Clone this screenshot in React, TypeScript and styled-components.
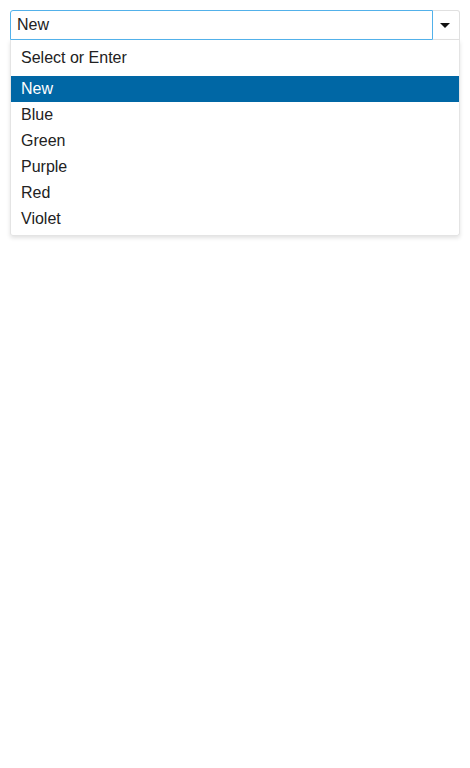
import styled, { createGlobalStyle } from 'styled-components';

const GlobalStyle = createGlobalStyle`
  body {
    margin: 0;
    background: #fff;
    font-family: "Liberation Sans", Arial, sans-serif;
  }
`;

const Page = styled.div`
  padding: 10px;
`;

const Combo = styled.div`
  width: 450px;
`;

const Field = styled.div`
  display: flex;
  height: 30px;
`;

const Input = styled.div`
  flex: 1;
  box-sizing: border-box;
  border: 1px solid #52b1ea;
  border-radius: 3px 0 0 0;
  padding: 0 6px;
  display: flex;
  align-items: center;
  font-size: 16px;
  color: #222;
`;

const Toggle = styled.div`
  width: 27px;
  box-sizing: border-box;
  border: 1px solid #e0e0e0;
  border-left: none;
  border-radius: 0 3px 0 0;
  display: flex;
  align-items: center;
  justify-content: center;
  padding-right: 2px;
`;

const Caret = styled.span`
  width: 0;
  height: 0;
  border-left: 5px solid transparent;
  border-right: 5px solid transparent;
  border-top: 5px solid #111;
`;

const List = styled.ul`
  list-style: none;
  margin: 0;
  padding: 0 0 3px;
  border: 1px solid #e4e4e4;
  border-top: none;
  border-radius: 0 0 3px 3px;
  box-shadow: 0 2px 4px rgba(0, 0, 0, 0.12);
`;

const Header = styled.li`
  height: 36px;
  padding: 0 10px;
  display: flex;
  align-items: center;
  font-size: 16px;
  color: #222;
`;

const Item = styled.li<{ $active?: boolean }>`
  height: 26px;
  padding: 0 10px;
  display: flex;
  align-items: center;
  font-size: 16px;
  color: ${({ $active }) => ($active ? '#fff' : '#222')};
  background: ${({ $active }) => ($active ? '#0067a5' : 'transparent')};
`;

const options = ['New', 'Blue', 'Green', 'Purple', 'Red', 'Violet'];

export default function App() {
  return (
    <Page>
      <GlobalStyle />
      <Combo>
        <Field>
          <Input>New</Input>
          <Toggle>
            <Caret />
          </Toggle>
        </Field>
        <List>
          <Header>Select or Enter</Header>
          {options.map((o) => (
            <Item key={o} $active={o === 'New'}>
              {o}
            </Item>
          ))}
        </List>
      </Combo>
    </Page>
  );
}
